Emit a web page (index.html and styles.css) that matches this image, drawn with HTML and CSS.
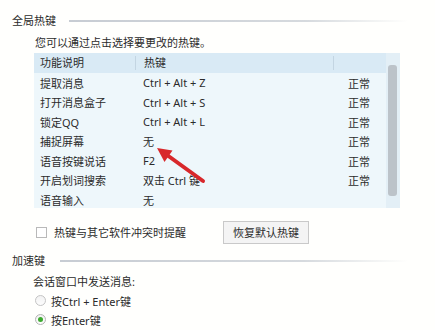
FILE: index.html
```html
<!DOCTYPE html>
<html lang="zh-CN">
<head>
    <meta charset="UTF-8">
    <title>热键设置</title>
    <link rel="stylesheet" href="styles.css">
</head>
<body>
    <div class="page">
        <div class="group-title">
            <span class="group-label">全局热键</span>
            <span class="group-line"></span>
        </div>
        <div class="hint">您可以通过点击选择要更改的热键。</div>

        <div class="hotkey-box">
            <div class="hotkey-list">
                <div class="list-head">
                    <span class="col-name">功能说明</span>
                    <span class="col-key">热键</span>
                    <span class="col-state"></span>
                </div>
                <div class="list-row"><span class="col-name">提取消息</span><span class="col-key">Ctrl + Alt + Z</span><span class="col-state">正常</span></div>
                <div class="list-row"><span class="col-name">打开消息盒子</span><span class="col-key">Ctrl + Alt + S</span><span class="col-state">正常</span></div>
                <div class="list-row"><span class="col-name">锁定QQ</span><span class="col-key">Ctrl + Alt + L</span><span class="col-state">正常</span></div>
                <div class="list-row"><span class="col-name">捕捉屏幕</span><span class="col-key">无</span><span class="col-state">正常</span></div>
                <div class="list-row"><span class="col-name">语音按键说话</span><span class="col-key">F2</span><span class="col-state">正常</span></div>
                <div class="list-row"><span class="col-name">开启划词搜索</span><span class="col-key">双击 Ctrl 键</span><span class="col-state">正常</span></div>
                <div class="list-row"><span class="col-name">语音输入</span><span class="col-key">无</span><span class="col-state"></span></div>
            </div>
            <div class="scroll-track"><div class="scroll-thumb"></div></div>
        </div>

        <div class="options-row">
            <label class="check">
                <span class="check-box"></span>
                <span>热键与其它软件冲突时提醒</span>
            </label>
            <button class="btn">恢复默认热键</button>
        </div>

        <div class="group-title second">
            <span class="group-label">加速键</span>
            <span class="group-line"></span>
        </div>
        <div class="send-label">会话窗口中发送消息:</div>
        <div class="radio-row"><span class="radio"></span><span>按Ctrl + Enter键</span></div>
        <div class="radio-row"><span class="radio checked"></span><span>按Enter键</span></div>

        <!-- red pointer arrow over the list -->
        <svg class="pointer" width="60" height="50" viewBox="0 0 60 50">
            <line x1="51" y1="39" x2="15" y2="13" stroke="#d8282b" stroke-width="4" stroke-linecap="round"/>
            <polygon points="5,6 20.5,8.5 12.5,20" fill="#d8282b"/>
        </svg>
    </div>
</body>
</html>
```

FILE: styles.css
```css
body {
    margin: 0;
    background: #fffffd;
    font-family: "Noto Sans", "Noto Sans CJK SC", sans-serif;
    font-size: 11px;
    color: #2b2b2b;
}
.page {
    position: relative;
    width: 435px;
    height: 330px;
    padding: 13px 0 0 12px;
    box-sizing: border-box;
    overflow: hidden;
}
.group-title {
    display: flex;
    align-items: center;
    height: 16px;
    width: 396px;
}
.group-title.second {
    margin-top: 9px;
}
.group-label {
    line-height: 16px;
    margin-right: 13px;
}
.second .group-label {
    margin-right: 15px;
}
.group-line {
    flex: 1;
    height: 2px;
    background: linear-gradient(to right, #c7ccd3, #d6dade 70%, rgba(230, 232, 235, 0));
}
.hint {
    margin: 6px 0 0 23px;
    height: 16px;
    line-height: 16px;
}
.hotkey-box {
    display: flex;
    margin: 2px 0 0 22px;
    width: 366px;
    height: 155px;
    background: #eef7fb;
    overflow: hidden;
}
.hotkey-list {
    flex: 1;
}
.list-head,
.list-row {
    display: flex;
    align-items: center;
}
.list-head {
    height: 20px;
    background: #d9eaf5;
}
.list-row {
    height: 19.5px;
}
.col-name {
    width: 102px;
    padding-left: 6px;
    box-sizing: border-box;
}
.col-key {
    width: 198px;
    padding-left: 7px;
    box-sizing: border-box;
}
.col-state {
    flex: 1;
    padding-left: 14px;
}
.list-head .col-name,
.list-head .col-key {
    border-right: 1px solid #c3d5e2;
    height: 14px;
    line-height: 14px;
}
.list-head .col-key {
    padding-left: 8px;
}
.scroll-track {
    width: 14px;
    padding: 12px 0 0 2px;
    box-sizing: border-box;
    background: #e3eff6;
}
.scroll-thumb {
    width: 9px;
    height: 131px;
    border-radius: 3px;
    background: #bcc3c9;
}
.options-row {
    display: flex;
    align-items: center;
    height: 24px;
    margin-top: 12px;
}
.check {
    display: flex;
    align-items: center;
    width: 211px;
    padding-left: 24px;
    box-sizing: border-box;
}
.check-box {
    width: 9px;
    height: 9px;
    border: 1px solid #b9b9b9;
    background: #fff;
    margin-right: 7px;
}
.btn {
    width: 86px;
    height: 23px;
    padding: 0;
    border: 1px solid #c9c9c9;
    background: #f4f4f4;
    font: inherit;
    color: #2b2b2b;
}
.send-label {
    margin: 5px 0 0 21px;
    height: 16px;
    line-height: 16px;
}
.radio-row {
    display: flex;
    align-items: center;
    height: 19px;
    padding-left: 23px;
}
.send-label + .radio-row {
    margin-top: 1px;
}
.radio {
    width: 9px;
    height: 9px;
    border: 1px solid #c4c4c4;
    border-radius: 50%;
    background: linear-gradient(#f2f2f2, #fdfdfd);
    margin-right: 5px;
    position: relative;
}
.radio.checked {
    border-color: #b5b5b5;
}
.radio.checked::after {
    content: "";
    position: absolute;
    left: 2px;
    top: 2px;
    width: 5px;
    height: 5px;
    border-radius: 50%;
    background: #3daa2f;
}
.pointer {
    position: absolute;
    left: 152px;
    top: 142px;
}
```
